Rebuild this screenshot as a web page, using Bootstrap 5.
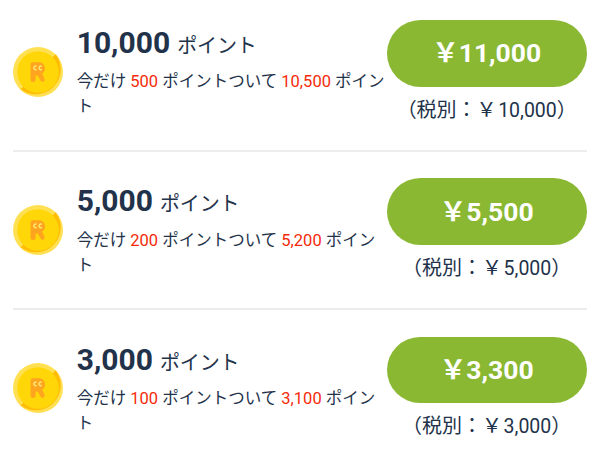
<!DOCTYPE html>
<html lang="ja">
<head>
<meta charset="utf-8">
<meta name="viewport" content="width=device-width, initial-scale=1">
<title>ポイント購入</title>
<link href="https://cdn.jsdelivr.net/npm/bootstrap@5.3.0/dist/css/bootstrap.min.css" rel="stylesheet">
<style>
body { font-family: Roboto, "Noto Sans CJK JP", sans-serif; color: #22324a; background: #fff; overflow: hidden; }
.plans { padding: 0 13.3px; margin-top: -6.4px; }
.plan { height: 158.4px; padding-top: 26.4px; border-bottom: 2px solid #ededed; }
.plan:last-child { border-bottom: 0; }
.coin { width: 50px; height: 50px; margin: 26.7px 13.7px 0 0; }
.points { font-size: 30px; line-height: 46.6px; margin-left: -.3px; }
.unit { font-size: 20px; margin-left: 7px; letter-spacing: -.1px; }
.bonus { font-size: 16.5px; line-height: 25px; margin: -.4px 0 0 -.3px; }
.hot { color: #f52a0a; }
.buy { width: 200px; }
.buy .btn { width: 200px; height: 66.5px; padding: 0; font-size: 26.5px; line-height: 66px; background: #8ab833; color: #fff; border: 0; }
.tax { font-size: 20px; line-height: 30px; margin-top: 8.2px; }
.tax-sum { font-size: 19.5px; margin-left: 1.5px; }
</style>
<script src="https://cdn.jsdelivr.net/npm/bootstrap@5.3.0/dist/js/bootstrap.bundle.min.js"></script>
</head>
<body>
<svg class="d-none" xmlns="http://www.w3.org/2000/svg">
  <symbol id="coin" viewBox="0 0 50 50">
    <circle cx="25" cy="25" r="25" fill="#ffe052"/>
    <path d="M42.7 7.3A25 25 0 0 1 7.7 42.3Z" fill="#ffbc05"/>
    <circle cx="25" cy="25" r="20.8" fill="#ffd608"/>
    <path d="M17.6 17.5a2.3 2.3 0 0 1 2.3-2.3h5.8a6.2 6.2 0 0 1 3.4 11.4l2.3 5a2.1 2.1 0 0 1-3.8 1.9L24.8 28.6h-2.2v4a2.4 2.4 0 0 1-5 0Z" fill="#ffa41f"/>
    <path d="M23.6 19.4a1.8 1.8 0 1 0 0 3M28.8 19.4a1.8 1.8 0 1 0 0 3" fill="none" stroke="#ffe875" stroke-width="1.4"/>
  </symbol>
</svg>
<main class="plans">
  <section class="plan d-flex align-items-start">
    <svg class="coin flex-shrink-0"><use href="#coin"/></svg>
    <div class="flex-grow-1 text-nowrap">
      <div class="points"><span class="fw-bold">10,000</span><span class="unit">ポイント</span></div>
      <div class="bonus">今だけ <span class="hot">500</span> ポイントついて <span class="hot">10,500</span> ポイン<br>ト</div>
    </div>
    <div class="buy flex-shrink-0 text-center text-nowrap">
      <button type="button" class="btn rounded-pill fw-bold">￥11,000</button>
      <div class="tax">（税別：￥<span class="tax-sum">10,000</span>）</div>
    </div>
  </section>
  <section class="plan d-flex align-items-start">
    <svg class="coin flex-shrink-0"><use href="#coin"/></svg>
    <div class="flex-grow-1 text-nowrap">
      <div class="points"><span class="fw-bold">5,000</span><span class="unit">ポイント</span></div>
      <div class="bonus">今だけ <span class="hot">200</span> ポイントついて <span class="hot">5,200</span> ポイン<br>ト</div>
    </div>
    <div class="buy flex-shrink-0 text-center text-nowrap">
      <button type="button" class="btn rounded-pill fw-bold">￥5,500</button>
      <div class="tax">（税別：￥<span class="tax-sum">5,000</span>）</div>
    </div>
  </section>
  <section class="plan d-flex align-items-start">
    <svg class="coin flex-shrink-0"><use href="#coin"/></svg>
    <div class="flex-grow-1 text-nowrap">
      <div class="points"><span class="fw-bold">3,000</span><span class="unit">ポイント</span></div>
      <div class="bonus">今だけ <span class="hot">100</span> ポイントついて <span class="hot">3,100</span> ポイン<br>ト</div>
    </div>
    <div class="buy flex-shrink-0 text-center text-nowrap">
      <button type="button" class="btn rounded-pill fw-bold">￥3,300</button>
      <div class="tax">（税別：￥<span class="tax-sum">3,000</span>）</div>
    </div>
  </section>
</main>
</body>
</html>
